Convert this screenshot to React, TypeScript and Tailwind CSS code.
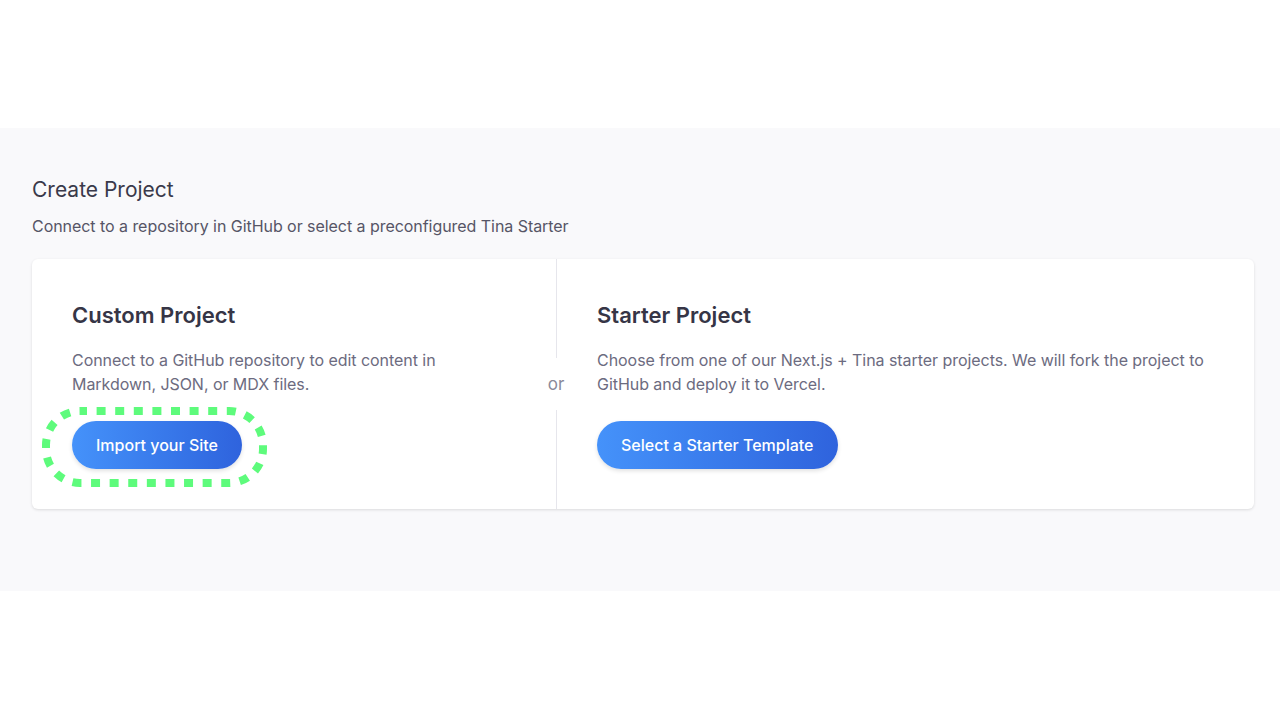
import React from "react";

export default function App() {
  return (
    <div className="w-[1280px] h-[720px] bg-white flex flex-col" style={{ fontFamily: "Inter, 'Noto Sans', sans-serif" }}>
      <div className="h-[128px] shrink-0 bg-white" />
      <div className="bg-[#f9f9fb] pl-8 pr-[26px] pt-12 pb-[82px]">
        <h1 className="text-[21px] leading-[28px] font-normal text-[#3a3a4a]">Create Project</h1>
        <p className="mt-[10px] text-[16px] leading-[24px] tracking-[-0.05px] text-[#565566]">
          Connect to a repository in GitHub or select a preconfigured Tina Starter
        </p>
        <div className="mt-[21px] bg-white rounded-md shadow-[0_1px_3px_rgba(0,0,0,0.12)] flex">
          <div className="w-[524px] shrink-0 px-10 py-10">
            <h2 className="text-[22px] leading-[33px] font-semibold text-[#363546]">Custom Project</h2>
            <p className="mt-4 text-[16px] leading-[24px] tracking-[-0.05px] text-[#6c6b80]">
              Connect to a GitHub repository to edit content in Markdown, JSON, or MDX files.
            </p>
            <div className="mt-[25px] relative inline-block">
              <button className="h-12 px-6 rounded-full text-white text-[16px] font-medium bg-gradient-to-r from-[#4592fa] to-[#2f63dd] shadow-[0_2px_4px_rgba(0,0,0,0.12)]">
                Import your Site
              </button>
              <svg
                className="absolute pointer-events-none"
                style={{ left: -30, top: -14 }}
                width="225"
                height="80"
                viewBox="0 0 225 80"
              >
                <rect
                  x="4"
                  y="4"
                  width="217"
                  height="72"
                  rx="34"
                  fill="none"
                  stroke="#5efb7c"
                  strokeWidth="8"
                  strokeDasharray="9 9.6"
                  strokeDashoffset="2"
                />
              </svg>
            </div>
          </div>
          <div className="w-0 flex flex-col items-center">
            <div className="flex-1 w-px bg-[#e6e6ec]" />
            <span className="py-3 text-[17px] leading-[28px] text-[#8a8a9a]">or</span>
            <div className="flex-1 w-px bg-[#e6e6ec]" />
          </div>
          <div className="flex-1 pl-[41px] pr-10 py-10">
            <h2 className="text-[22px] leading-[33px] font-semibold text-[#363546]">Starter Project</h2>
            <p className="mt-4 text-[16px] leading-[24px] tracking-[-0.05px] text-[#6c6b80]">
              Choose from one of our Next.js + Tina starter projects. We will fork the project to GitHub and deploy it to Vercel.
            </p>
            <div className="mt-[25px]">
              <button className="h-12 px-6 rounded-full text-white text-[16px] font-medium bg-gradient-to-r from-[#4592fa] to-[#2f63dd] shadow-[0_2px_4px_rgba(0,0,0,0.12)]">
                Select a Starter Template
              </button>
            </div>
          </div>
        </div>
      </div>
      <div className="flex-1 bg-white" />
    </div>
  );
}
